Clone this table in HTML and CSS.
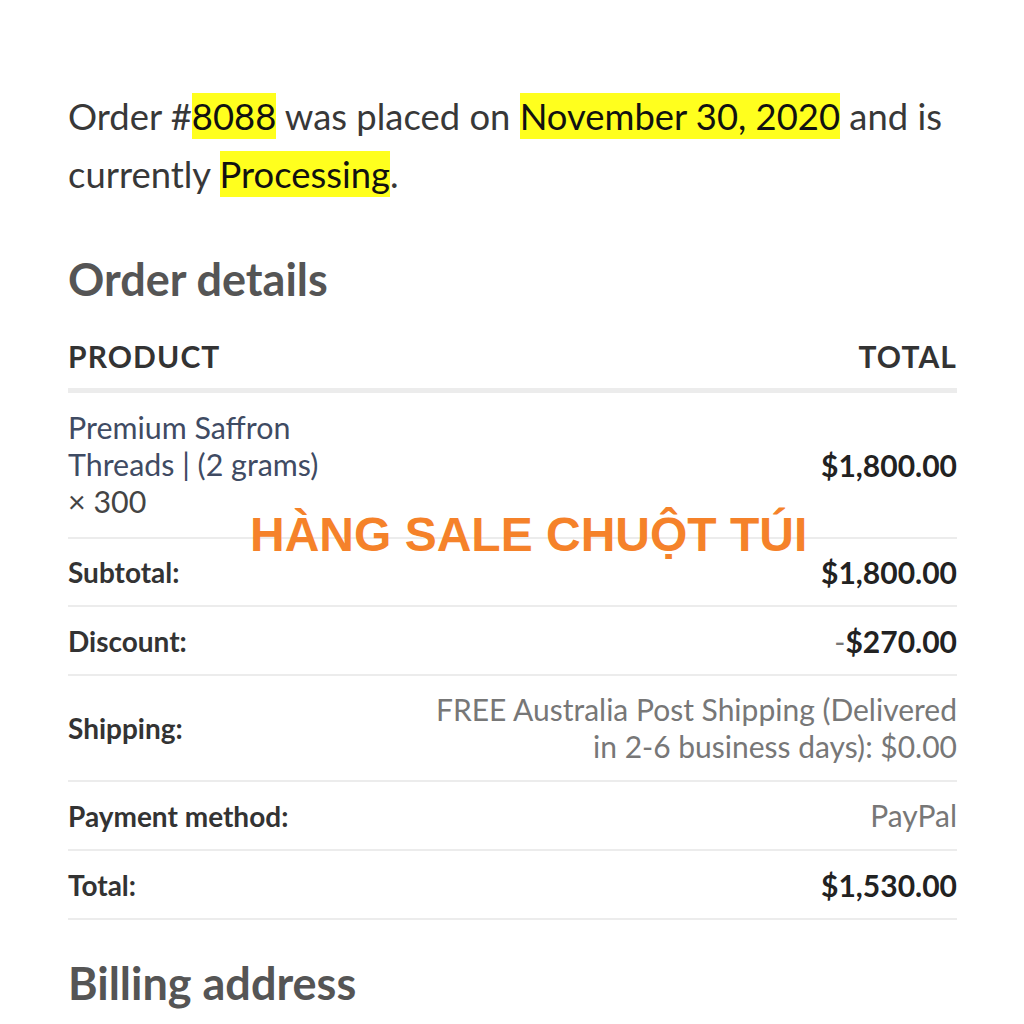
FILE: index.html
```html
<!DOCTYPE html>
<html lang="en">
<head>
<meta charset="utf-8">
<link rel="stylesheet" href="styles.css">
</head>
<body>
<div class="page">
  <p class="intro">Order #<mark>8088</mark> was placed on <mark>November 30, 2020</mark> and is currently <mark>Processing</mark>.</p>
  <h2 class="heading">Order details</h2>
  <div class="table">
    <div class="row head">
      <div class="th">Product</div>
      <div class="th">Total</div>
    </div>
    <div class="row item">
      <div class="product"><span class="pname">Premium Saffron<br>Threads | (2 grams)</span><br><span class="qty">× 300</span></div>
      <div class="amount">$1,800.00</div>
    </div>
    <div class="row foot first">
      <div class="label">Subtotal:</div>
      <div class="amount">$1,800.00</div>
    </div>
    <div class="row foot">
      <div class="label">Discount:</div>
      <div class="amount"><span class="minus">-</span>$270.00</div>
    </div>
    <div class="row foot tall">
      <div class="label">Shipping:</div>
      <div class="plain">FREE Australia Post Shipping (Delivered<br>in 2-6 business days): $0.00</div>
    </div>
    <div class="row foot">
      <div class="label">Payment method:</div>
      <div class="plain">PayPal</div>
    </div>
    <div class="row foot">
      <div class="label">Total:</div>
      <div class="amount">$1,530.00</div>
    </div>
  </div>
  <h2 class="heading billing">Billing address</h2>
  <div class="watermark">HÀNG SALE CHUỘT TÚI</div>
</div>
</body>
</html>
```
FILE: styles.css
```css
html, body {
  margin: 0;
  padding: 0;
  background: #fff;
}
body {
  font-family: Lato, "Noto Sans", sans-serif;
  color: #333;
}
.page {
  position: relative;
  width: 889px;
  padding: 87px 0 0 68px;
  height: 937px;
  overflow: hidden;
}
.intro {
  margin: 0;
  font-size: 36.4px;
  line-height: 58px;
  color: #383838;
}
.intro mark {
  background: #ffff1e;
  color: #111;
  padding: 1px 0;
}
.heading {
  margin: 48px 0 0;
  font-size: 45px;
  line-height: 56px;
  font-weight: 700;
  color: #555;
  white-space: nowrap;
}
.table {
  margin-top: 27px;
}
.row {
  display: flex;
  justify-content: space-between;
  align-items: center;
  border-bottom: 2px solid #ececec;
}
.head {
  border-bottom: 5px solid #ececec;
  height: 54px;
  align-items: flex-start;
}
.th {
  font-size: 30px;
  font-weight: 700;
  text-transform: uppercase;
  letter-spacing: 1.1px;
  color: #333;
  line-height: 40px;
  padding-top: 2px;
}
.item {
  padding: 16px 0 17px;
}
.product {
  font-size: 30.4px;
  line-height: 37px;
}
.pname {
  color: #3f4b63;
}
.qty {
  color: #444;
}
.amount {
  font-size: 30px;
  font-weight: 700;
  color: #222;
  text-align: right;
  white-space: nowrap;
}
.minus {
  font-weight: 400;
  color: #777;
}
.label {
  font-size: 28px;
  font-weight: 700;
  color: #333;
  white-space: nowrap;
}
.plain {
  font-size: 30px;
  line-height: 37px;
  color: #777;
  text-align: right;
  white-space: nowrap;
}
.foot {
  height: 67px;
}
.foot.first {
  height: 66px;
}
.foot.tall {
  height: 104px;
}
.billing {
  margin-top: 35px;
}
.watermark {
  position: absolute;
  left: 250px;
  top: 507px;
  font-family: "Liberation Sans", Arial, sans-serif;
  font-weight: 700;
  font-size: 48px;
  color: #f5822a;
  white-space: nowrap;
}
```
